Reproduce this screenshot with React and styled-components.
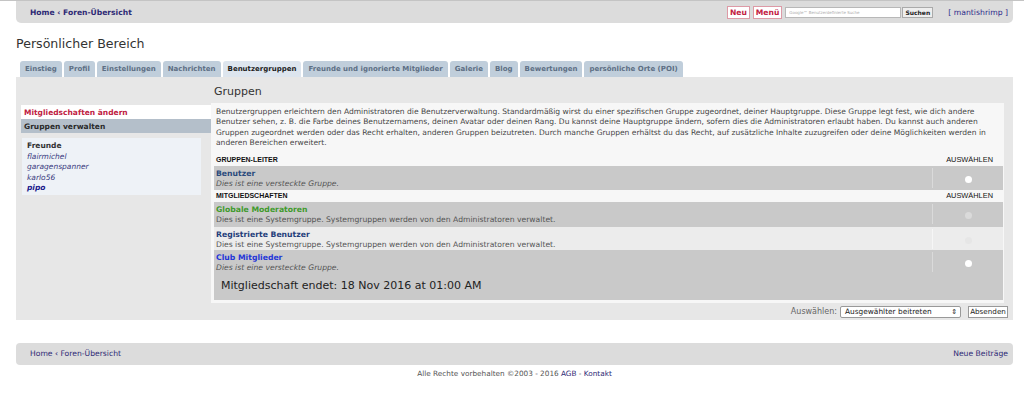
import React from "react";
import styled, { createGlobalStyle } from "styled-components";

const GlobalStyle = createGlobalStyle`
  html, body {
    margin: 0;
    padding: 0;
    background: #fff;
    font-family: "DejaVu Sans", Verdana, sans-serif;
    color: #333;
  }
  body {
    border-top: 1px solid #c4c4c4;
  }
`;

const Page = styled.div`
  width: 997px;
  margin-left: 16px;
`;

/* Kopfleiste */
const TopBar = styled.div`
  height: 22px;
  background: #dcdcdc;
  border-radius: 0 0 5px 5px;
  display: flex;
  align-items: center;
  padding: 0 5px 0 14px;
`;

const Crumbs = styled.div`
  flex: 1;
  font-size: 7.6px;
  font-weight: 700;
  color: #2e2a75;
`;

const BoxButton = styled.span`
  display: inline-flex;
  align-items: center;
  height: 11px;
  padding: 0 2px;
  margin-right: 3px;
  background: #fff;
  border: 1px solid #dd9aa6;
  color: #c2203f;
  font-size: 7.6px;
  font-weight: 700;
`;

const SearchInput = styled.div`
  width: 116px;
  height: 11px;
  box-sizing: border-box;
  border: 1px solid #b8b8b8;
  background: #fff;
  font-size: 4px;
  color: #aaa;
  display: flex;
  align-items: center;
  padding-left: 3px;
`;

const SearchButton = styled.span`
  display: inline-flex;
  align-items: center;
  justify-content: center;
  width: 31px;
  height: 11px;
  box-sizing: border-box;
  margin-left: 1px;
  background: #eee;
  border: 1px solid #aaa;
  font-size: 6px;
  font-weight: 700;
  color: #222;
`;

const UserLink = styled.span`
  margin-left: 15px;
  font-size: 7.7px;
  color: #2e2a8a;
`;

const Title = styled.h1`
  margin: 13px 0 0;
  height: 25px;
  font-size: 12.6px;
  font-weight: 400;
  color: #333;
`;

/* Reiter */
const Tabs = styled.div`
  display: flex;
  gap: 2px;
  padding-left: 4px;
`;

const Tab = styled.div`
  height: 16px;
  display: flex;
  align-items: center;
  padding: 0 5px;
  border-radius: 3px 3px 0 0;
  background: ${(p) => (p.$active ? "#dde5ee" : "#c0cedb")};
  color: ${(p) => (p.$active ? "#1c1c1c" : "#5d6f84")};
  font-size: 7px;
  font-weight: 700;
  white-space: nowrap;
`;

/* Hauptbereich */
const Panel = styled.div`
  background: #e7e7e7;
  display: flex;
  padding: 0 9px 2px 5px;
`;

const Sidebar = styled.div`
  width: 190px;
  padding-top: 28px;
`;

const MenuItem = styled.div`
  height: 14px;
  display: flex;
  align-items: center;
  padding-left: 3px;
  font-size: 7.5px;
  font-weight: 700;
  background: ${(p) => (p.$active ? "#fff" : "#b4bfca")};
  color: ${(p) => (p.$active ? "#c0203f" : "#2a2a2a")};
`;

const FriendBox = styled.div`
  margin: 5px 10px 0 1px;
  padding: 3px 5px 1px;
  background: #eef2f7;
  font-size: 7.5px;
  line-height: 10.6px;
`;

const FriendHead = styled.div`
  font-weight: 700;
  color: #333;
`;

const Friend = styled.div`
  font-style: italic;
  color: ${(p) => (p.$online ? "#1a1a8c" : "#3a3a80")};
  font-weight: ${(p) => (p.$online ? 700 : 400)};
`;

const Main = styled.div`
  flex: 1;
`;

const MainHead = styled.h2`
  margin: 0;
  height: 26px;
  display: flex;
  align-items: flex-end;
  padding: 0 0 5px 3px;
  box-sizing: border-box;
  font-size: 11px;
  font-weight: 400;
  color: #333;
`;

const Content = styled.div`
  background: #f7f7f7;
  padding: 3px 1px 3px 3px;
`;

const Intro = styled.p`
  margin: 0 0 5px 2px;
  padding-top: 1px;
  font-size: 7.55px;
  line-height: 10.4px;
  color: #444;
`;

const HeadRow = styled.div`
  display: grid;
  grid-template-columns: 1fr 71px;
  height: 12px;
  align-items: center;
  font-family: "Liberation Sans", Arial, sans-serif;
  font-size: 7px;
  font-weight: 700;
  color: #111;
  padding-left: 2px;
`;

const HeadSelect = styled.span`
  text-align: right;
  padding-right: 10px;
  font-weight: 400;
  font-size: 7.4px;
`;

const GroupRow = styled.div`
  background: ${(p) => (p.$light ? "#ececec" : "#c9c9c9")};
  padding-bottom: ${(p) => p.$bottom || 0}px;
`;

const GroupMain = styled.div`
  display: grid;
  grid-template-columns: 1fr 71px;
  height: ${(p) => p.$h || 24}px;
`;

const GroupInfo = styled.div`
  padding: 2px 0 0 2px;
`;

const GroupName = styled.div`
  font-size: 7.7px;
  font-weight: 700;
  line-height: 11px;
  color: ${(p) => p.color};
`;

const GroupDesc = styled.div`
  font-size: 7.65px;
  line-height: 10px;
  font-style: ${(p) => (p.$italic ? "italic" : "normal")};
  color: #555;
`;

const SelectCell = styled.div`
  border-left: 1px solid ${(p) => (p.$light ? "#f6f6f6" : "#dadada")};
  margin-top: 2px;
  height: 20px;
  display: flex;
  justify-content: center;
  padding-top: 8px;
  box-sizing: border-box;
`;

const Radio = styled.span`
  width: 7px;
  height: 7px;
  border-radius: 50%;
  background: ${(p) => p.fill};
`;

const Expiry = styled.div`
  font-size: 11px;
  line-height: 13px;
  padding: 5px 0 0 7px;
  height: 13px;
  color: #222;
`;

const FormRow = styled.div`
  display: flex;
  justify-content: flex-end;
  align-items: center;
  height: 12px;
  margin-right: -4px;
  padding-top: 3px;
`;

const FormLabel = styled.span`
  font-size: 8px;
  color: #666;
  margin-right: 3px;
`;

const FakeSelect = styled.div`
  width: 121px;
  height: 12px;
  box-sizing: border-box;
  border: 1px solid #999;
  border-radius: 2px;
  background: #fff;
  display: flex;
  align-items: center;
  justify-content: space-between;
  padding: 0 3px 0 4px;
  font-size: 7.4px;
  color: #222;
  margin-right: 7px;
`;

const Button = styled.span`
  height: 12px;
  width: 40px;
  box-sizing: border-box;
  display: inline-flex;
  align-items: center;
  justify-content: center;
  border: 1px solid #999;
  background: #fff;
  font-size: 7.2px;
  color: #222;
`;

/* Fußbereich */
const FooterBar = styled.div`
  margin-top: 23px;
  height: 22px;
  background: #dcdcdc;
  border-radius: 4px;
  display: flex;
  align-items: center;
  justify-content: space-between;
  padding: 0 5px 0 14px;
  font-size: 7.65px;
  color: #2e2a75;
`;

const Copyright = styled.div`
  text-align: center;
  margin-top: 4px;
  font-size: 7.3px;
  color: #555;
`;

const NavLink = styled.span`
  color: #2e2a75;
`;

const tabs = [
  "Einstieg",
  "Profil",
  "Einstellungen",
  "Nachrichten",
  "Benutzergruppen",
  "Freunde und ignorierte Mitglieder",
  "Galerie",
  "Blog",
  "Bewertungen",
  "persönliche Orte (POI)",
];

export default function App() {
  return (
    <>
      <GlobalStyle />
      <Page>
        <TopBar>
          <Crumbs>Home ‹ Foren-Übersicht</Crumbs>
          <BoxButton>Neu</BoxButton>
          <BoxButton>Menü</BoxButton>
          <SearchInput>Google™ Benutzerdefinierte Suche</SearchInput>
          <SearchButton>Suchen</SearchButton>
          <UserLink>[ mantishrimp ]</UserLink>
        </TopBar>

        <Title>Persönlicher Bereich</Title>

        <Tabs>
          {tabs.map((t) => (
            <Tab key={t} $active={t === "Benutzergruppen"}>
              {t}
            </Tab>
          ))}
        </Tabs>

        <Panel>
          <Sidebar>
            <MenuItem $active>Mitgliedschaften ändern</MenuItem>
            <MenuItem>Gruppen verwalten</MenuItem>
            <FriendBox>
              <FriendHead>Freunde</FriendHead>
              <Friend>flairmichel</Friend>
              <Friend>garagenspanner</Friend>
              <Friend>karlo56</Friend>
              <Friend $online>pipo</Friend>
            </FriendBox>
          </Sidebar>

          <Main>
            <MainHead>Gruppen</MainHead>
            <Content>
              <Intro>
                Benutzergruppen erleichtern den Administratoren die Benutzerverwaltung.
                Standardmäßig wirst du einer spezifischen Gruppe zugeordnet, deiner
                Hauptgruppe. Diese Gruppe legt fest, wie dich andere Benutzer sehen, z. B.
                die Farbe deines Benutzernamens, deinen Avatar oder deinen Rang. Du kannst
                deine Hauptgruppe ändern, sofern dies die Administratoren erlaubt haben. Du
                kannst auch anderen Gruppen zugeordnet werden oder das Recht erhalten,
                anderen Gruppen beizutreten. Durch manche Gruppen erhältst du das Recht, auf
                zusätzliche Inhalte zuzugreifen oder deine Möglichkeiten werden in anderen
                Bereichen erweitert.
              </Intro>

              <HeadRow>
                <span>GRUPPEN-LEITER</span>
                <HeadSelect>AUSWÄHLEN</HeadSelect>
              </HeadRow>
              <GroupRow>
                <GroupMain>
                  <GroupInfo>
                    <GroupName color="#2b4a7c">Benutzer</GroupName>
                    <GroupDesc $italic>Dies ist eine versteckte Gruppe.</GroupDesc>
                  </GroupInfo>
                  <SelectCell>
                    <Radio fill="#fff" />
                  </SelectCell>
                </GroupMain>
              </GroupRow>

              <HeadRow>
                <span>MITGLIEDSCHAFTEN</span>
                <HeadSelect>AUSWÄHLEN</HeadSelect>
              </HeadRow>
              <GroupRow>
                <GroupMain $h={25}>
                  <GroupInfo>
                    <GroupName color="#3f9a2c">Globale Moderatoren</GroupName>
                    <GroupDesc>
                      Dies ist eine Systemgruppe. Systemgruppen werden von den Administratoren
                      verwaltet.
                    </GroupDesc>
                  </GroupInfo>
                  <SelectCell>
                    <Radio fill="#dadada" />
                  </SelectCell>
                </GroupMain>
              </GroupRow>
              <GroupRow $light>
                <GroupMain $h={23}>
                  <GroupInfo>
                    <GroupName color="#1f3d7a">Registrierte Benutzer</GroupName>
                    <GroupDesc>
                      Dies ist eine Systemgruppe. Systemgruppen werden von den Administratoren
                      verwaltet.
                    </GroupDesc>
                  </GroupInfo>
                  <SelectCell $light>
                    <Radio fill="#e6e6e6" />
                  </SelectCell>
                </GroupMain>
              </GroupRow>
              <GroupRow $bottom={8}>
                <GroupMain>
                  <GroupInfo>
                    <GroupName color="#2436d8">Club Mitglieder</GroupName>
                    <GroupDesc $italic>Dies ist eine versteckte Gruppe.</GroupDesc>
                  </GroupInfo>
                  <SelectCell>
                    <Radio fill="#fff" />
                  </SelectCell>
                </GroupMain>
                <Expiry>Mitgliedschaft endet: 18 Nov 2016 at 01:00 AM</Expiry>
              </GroupRow>
            </Content>

            <FormRow>
              <FormLabel>Auswählen:</FormLabel>
              <FakeSelect>
                <span>Ausgewählter beitreten</span>
                <span style={{ fontSize: "7px" }}>⇕</span>
              </FakeSelect>
              <Button>Absenden</Button>
            </FormRow>
          </Main>
        </Panel>

        <FooterBar>
          <span>Home ‹ Foren-Übersicht</span>
          <span>Neue Beiträge</span>
        </FooterBar>
        <Copyright>
          Alle Rechte vorbehalten ©2003 - 2016 <NavLink>AGB</NavLink> -{" "}
          <NavLink>Kontakt</NavLink>
        </Copyright>
      </Page>
    </>
  );
}
